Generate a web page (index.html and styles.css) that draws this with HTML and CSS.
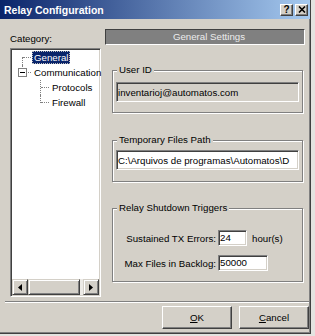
FILE: index.html
```html
<!DOCTYPE html>
<html lang="en">
<head>
  <meta charset="UTF-8" />
  <title>Relay Configuration</title>
  <link rel="stylesheet" href="styles.css">
</head>
<body>
  <div class="window">
    <div class="titlebar">
      <span class="title">Relay Configuration</span>
      <div class="caption-buttons">
        <span class="cap-btn">?</span>
        <span class="cap-btn">
          <svg width="8" height="7" viewBox="0 0 8 7"><path d="M1 0.5 L7 6.5 M7 0.5 L1 6.5" stroke="#000" stroke-width="1.6"/></svg>
        </span>
      </div>
    </div>

    <div class="content">
      <div class="main">
        <div class="sidebar">
          <div class="cat-label">Category:</div>
          <div class="tree">
            <ul class="nodes">
              <li class="node"><span class="twig first"></span><span class="label selected">General</span></li>
              <li class="node"><span class="twig last"><span class="expander"></span></span><span class="label">Communication</span></li>
              <li class="node child"><span class="twig mid"></span><span class="label">Protocols</span></li>
              <li class="node child"><span class="twig last"></span><span class="label">Firewall</span></li>
            </ul>
            <div class="hscroll">
              <span class="sb-btn">
                <svg width="4" height="7" viewBox="0 0 4 7"><path d="M4 0 L0 3.5 L4 7 Z" fill="#000"/></svg>
              </span>
              <span class="sb-track"><span class="sb-thumb"></span></span>
              <span class="sb-btn">
                <svg width="4" height="7" viewBox="0 0 4 7"><path d="M0 0 L4 3.5 L0 7 Z" fill="#000"/></svg>
              </span>
            </div>
          </div>
        </div>

        <div class="panel">
          <div class="panel-head">General Settings</div>

          <fieldset class="group user-id">
            <legend>User ID</legend>
            <input class="field readonly" type="text" value="inventarioj@automatos.com" readonly>
          </fieldset>

          <fieldset class="group temp-path">
            <legend>Temporary Files Path</legend>
            <input class="field" type="text" value="C:\Arquivos de programas\Automatos\D">
          </fieldset>

          <fieldset class="group triggers">
            <legend>Relay Shutdown Triggers</legend>
            <div class="trigger-grid">
              <label class="trigger-label">Sustained TX Errors:</label>
              <div class="trigger-value">
                <input class="field small hours" type="text" value="24">
                <span class="unit">hour(s)</span>
              </div>
              <label class="trigger-label">Max Files in Backlog:</label>
              <div class="trigger-value">
                <input class="field small backlog" type="text" value="50000">
              </div>
            </div>
          </fieldset>
        </div>
      </div>

      <div class="separator"></div>

      <div class="actions">
        <button class="btn"><u>O</u>K</button>
        <button class="btn"><u>C</u>ancel</button>
      </div>
    </div>
  </div>
</body>
</html>
```

FILE: styles.css
```css
/* Classic Windows dialog look */
*, *::before, *::after {
  box-sizing: border-box;
}

html, body {
  margin: 0;
  padding: 0;
}

body {
  background: #e4e3e0;
  font-family: "Liberation Sans", Arial, sans-serif;
  font-size: 9.7px;
  color: #000;
}

.window {
  width: 311px;
  height: 334px;
  background: #d4d0c8;
  border-right: 1px solid #404040;
  border-bottom: 1px solid #404040;
  box-shadow: inset -1px -1px #808080;
  display: flex;
  flex-direction: column;
}

/* Title bar */
.titlebar {
  height: 19px;
  flex-shrink: 0;
  display: flex;
  align-items: center;
  justify-content: space-between;
  padding: 0 2px 0 4px;
  background: linear-gradient(to right, #0a246a, #a6caf0);
  color: #fff;
}

.title {
  font-weight: bold;
  font-size: 10.5px;
}

.caption-buttons {
  display: flex;
  gap: 2px;
}

.cap-btn {
  width: 13px;
  height: 12px;
  background: #d4d0c8;
  border: 1px solid;
  border-color: #fff #404040 #404040 #fff;
  box-shadow: inset -1px -1px #808080;
  display: flex;
  align-items: center;
  justify-content: center;
  color: #000;
  font-weight: bold;
  font-size: 10px;
  line-height: 10px;
}

/* Content */
.content {
  flex: 1;
  display: flex;
  flex-direction: column;
  padding: 10px 1px 4px 0;
}

.main {
  display: flex;
  gap: 4px;
  padding-left: 10px;
}

.sidebar {
  width: 91px;
  padding-top: 4px;
  display: flex;
  flex-direction: column;
}

.cat-label {
  line-height: 12px;
  margin-bottom: 3px;
}

/* Tree view */
.tree {
  height: 249px;
  background: #fff;
  border: 1px solid;
  border-color: #808080 #fff #fff #808080;
  box-shadow: inset 1px 1px #404040, inset -1px -1px #d4d0c8;
  padding: 1px;
  display: flex;
  flex-direction: column;
}

.nodes {
  flex: 1;
  list-style: none;
  margin: 0;
  padding: 0;
}

.node {
  display: flex;
  align-items: center;
  height: 15px;
  white-space: nowrap;
}

.node.child {
  padding-left: 18px;
}

.twig {
  position: relative;
  width: 20px;
  height: 15px;
  flex-shrink: 0;
}

.twig::before {
  content: "";
  position: absolute;
  left: 10px;
  border-left: 1px dotted #808080;
}

.twig.first::before { top: 7px; bottom: 0; }
.twig.mid::before { top: 0; bottom: 0; }
.twig.last::before { top: 0; height: 8px; }

.twig::after {
  content: "";
  position: absolute;
  left: 11px;
  right: 1px;
  top: 7px;
  border-top: 1px dotted #808080;
}

.expander {
  position: absolute;
  left: 6px;
  top: 3px;
  width: 9px;
  height: 9px;
  background: #fff;
  border: 1px solid #808080;
  z-index: 1;
}

.expander::after {
  content: "";
  position: absolute;
  left: 1px;
  right: 1px;
  top: 3px;
  border-top: 1px solid #000;
}

.label {
  padding: 0 2px;
  line-height: 13px;
}

.label.selected {
  background: #0a246a;
  color: #fff;
  outline: 1px dotted #c0c0c0;
  outline-offset: -1px;
}

/* Horizontal scrollbar */
.hscroll {
  height: 16px;
  display: flex;
  background: #eceae6;
}

.sb-btn {
  width: 16px;
  height: 16px;
  flex-shrink: 0;
  background: #d4d0c8;
  border: 1px solid;
  border-color: #d4d0c8 #404040 #404040 #d4d0c8;
  box-shadow: inset 1px 1px #fff, inset -1px -1px #808080;
  display: flex;
  align-items: center;
  justify-content: center;
}

.sb-track {
  flex: 1;
  display: flex;
  padding-right: 3px;
}

.sb-thumb {
  flex: 1;
  background: #d4d0c8;
  border: 1px solid;
  border-color: #d4d0c8 #404040 #404040 #d4d0c8;
  box-shadow: inset 1px 1px #fff, inset -1px -1px #808080;
}

/* Right panel */
.panel {
  width: 200px;
}

.panel-head {
  height: 16px;
  background: #808080;
  border: 1px solid;
  border-color: #404040 #fff #fff #404040;
  color: #ececec;
  text-align: center;
  line-height: 14px;
  padding-left: 8px;
}

.group {
  margin: 19px 2px 0 7px;
  padding: 6px 3px 10px;
  border: 1px solid #808080;
  box-shadow: inset 1px 1px #fff, 1px 1px #fff;
  min-width: 0;
}

.group legend {
  margin-left: 1px;
  padding: 0 2px;
  line-height: 12px;
  background: #d4d0c8;
}

.temp-path {
  margin-top: 21px;
  padding: 4px 3px 11px;
}

.triggers {
  margin-top: 20px;
  padding: 16px 3px 10px;
}

.field {
  display: block;
  width: 100%;
  height: 20px;
  margin: 0;
  padding: 0 1px;
  font: inherit;
  color: #000;
  background: #fff;
  border: 1px solid;
  border-color: #808080 #fff #fff #808080;
  box-shadow: inset 1px 1px #404040, inset -1px -1px #d4d0c8;
  outline: none;
}

.field.readonly {
  background: #d4d0c8;
}

.trigger-grid {
  display: grid;
  grid-template-columns: 100px auto;
  column-gap: 2px;
  row-gap: 9px;
  align-items: center;
}

.trigger-label {
  text-align: right;
  white-space: nowrap;
}

.trigger-value {
  display: flex;
  align-items: center;
  gap: 5px;
}

.field.small {
  height: 16px;
  padding-bottom: 2px;
}

.field.hours {
  width: 29px;
}

.field.backlog {
  width: 50px;
}

/* Bottom */
.separator {
  margin: 4px 0 0 5px;
  height: 2px;
  border-top: 1px solid #808080;
  border-bottom: 1px solid #fff;
}

.actions {
  display: flex;
  justify-content: flex-end;
  gap: 7px;
  margin-top: 3px;
}

.btn {
  width: 70px;
  height: 23px;
  margin: 0;
  padding: 0;
  font: inherit;
  color: #000;
  background: #d4d0c8;
  border: 1px solid;
  border-color: #fff #404040 #404040 #fff;
  box-shadow: inset -1px -1px #808080;
}
```
